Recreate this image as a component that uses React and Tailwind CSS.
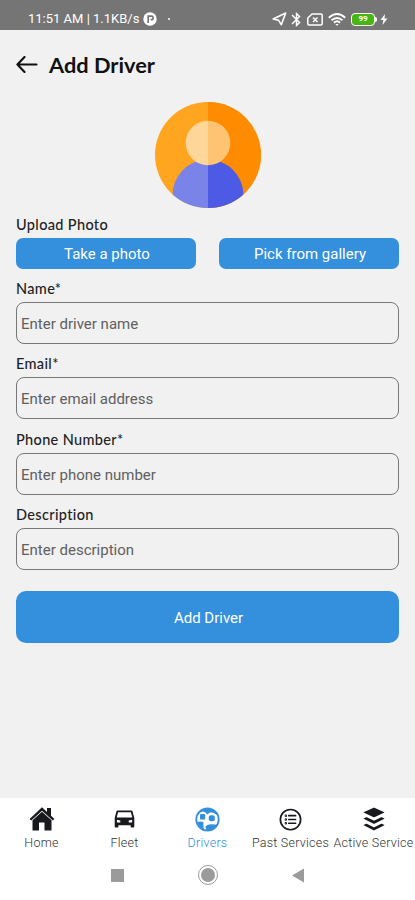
import React, { useState } from "react";
import { FaBuffer } from "react-icons/fa";
import { IoListCircleOutline } from "react-icons/io5";
import { MdBluetooth } from "react-icons/md";

const fields = [
  { name: "name", label: "Name*", placeholder: "Enter driver name" },
  { name: "email", label: "Email*", placeholder: "Enter email address" },
  { name: "phone", label: "Phone Number*", placeholder: "Enter phone number" },
  { name: "description", label: "Description", placeholder: "Enter description" },
];

const HomeIcon = () => (
  <svg width="26" height="24" viewBox="0 0 26 24" fill="#17191c">
    <path d="M13 0.3 L0.6 12 L2.2 13.6 L13 3.8 L23.8 13.6 L25.4 12 L22 8.8 V1 H18 V5 Z" />
    <path d="M13 4.7 L3.5 13.3 V23.6 H10 V15.5 H15.5 V23.6 H22.5 V13.3 Z" />
  </svg>
);

const CarIcon = () => (
  <svg width="21" height="18" viewBox="0 0 21 18" fill="#17191c">
    <path
      fillRule="evenodd"
      d="M3.6 0.5 H17.4 Q18.4 0.5 18.6 1.4 L20.3 8 V16.4 Q20.3 17.5 19.3 17.5 H17.6 Q16.6 17.5 16.6 16.4 V15.2 H4.4 V16.4 Q4.4 17.5 3.4 17.5 H1.7 Q0.7 17.5 0.7 16.4 V8 L2.4 1.4 Q2.6 0.5 3.6 0.5 Z M4.1 2.2 L2.7 7.6 H18.3 L16.9 2.2 Z M2.9 9.8 L6.3 10.6 V12.6 H2.9 Z M18.1 9.8 L14.7 10.6 V12.6 H18.1 Z"
    />
  </svg>
);

const DriversIcon = () => (
  <svg width="25" height="25" viewBox="0 0 25 25">
    <circle cx="12.5" cy="12.5" r="11.2" fill="#fff" stroke="#348fdc" strokeWidth="1.8" />
    <path d="M2.2 15 Q5 14 8.4 15 V20.5 L10 22.5 Q5 22 2.2 15 Z" fill="#348fdc" />
    <path d="M10.4 20 Q11.5 17.2 16.5 17.2 Q20.5 17.2 22.3 18 Q18.5 23.7 11.5 23.3 Z" fill="#348fdc" />
    <path d="M3 7 Q7.5 0.5 14 1.8 Q21 3 22.6 8.2 L20.5 7 Q18 4.8 15 5.6 L12.2 7.4 Q10.5 4.6 7.7 4.6 Q4.8 4.8 3 8 Z" fill="#348fdc" />
    <rect x="5" y="7" width="5.2" height="5.6" rx="1.2" fill="#348fdc" />
    <rect x="13.8" y="8.2" width="6" height="6" rx="2" fill="#348fdc" />
  </svg>
);

const Avatar = () => (
  <svg width="106" height="106" viewBox="0 0 106 106">
    <defs>
      <clipPath id="avatarCircle">
        <circle cx="53" cy="53" r="53" />
      </clipPath>
      <clipPath id="avatarRight">
        <rect x="53" width="53" height="106" />
      </clipPath>
    </defs>
    <g clipPath="url(#avatarCircle)">
      <rect width="106" height="106" fill="#ffa51f" />
      <circle cx="53" cy="93" r="35.5" fill="#7983e8" />
      <circle cx="53" cy="41" r="22.3" fill="#ffd69a" />
      <g clipPath="url(#avatarRight)">
        <rect width="106" height="106" fill="#ff8c00" />
        <circle cx="53" cy="93" r="35.5" fill="#4c5ae5" />
        <circle cx="53" cy="41" r="22.3" fill="#ffc473" />
      </g>
    </g>
  </svg>
);

const StatusBar = () => (
  <div className="flex h-[30px] items-center bg-[#757575] pt-2 pr-[27px] pl-7 text-[13px] text-white">
    <span className="w-[112px] whitespace-nowrap">11:51 AM | 1.1KB/s</span>
    <svg className="ml-[3px]" width="14" height="14" viewBox="0 0 14 14">
      <circle cx="7" cy="7" r="6.7" fill="#fff" />
      <path d="M5.2 11 V4.2 H8.4 a1.7 1.7 0 0 1 0 3.4 H7.6" fill="none" stroke="#757575" strokeWidth="1.7" />
    </svg>
    <span className="ml-[11px] h-[2px] w-[2px] rounded-full bg-white" />
    <div className="ml-auto flex items-center">
      <svg width="15" height="14" viewBox="0 0 15 14" fill="none" stroke="#fff" strokeWidth="1.6" strokeLinejoin="round">
        <path d="M13.7 1 L1.2 7 L6.6 8.3 L9.3 12.7 Z" />
      </svg>
      <MdBluetooth className="ml-[1px] h-[17px] w-[17px]" />
      <svg className="ml-[2px]" width="16" height="13" viewBox="0 0 16 13" fill="none" stroke="#fff" strokeWidth="1.5">
        <path d="M5 1 H14 Q15.2 1 15.2 2.2 V10.8 Q15.2 12 14 12 H2 Q0.8 12 0.8 10.8 V5 Z" strokeLinejoin="round" />
        <path d="M6 4.5 L10.5 9 M10.5 4.5 L6 9" />
      </svg>
      <svg className="ml-[5px]" width="18" height="13" viewBox="0 0 18 13" fill="none" stroke="#fff" strokeWidth="1.9">
        <path d="M0.8 4.7 Q9 -2.7 17.2 4.7 M3.5 7.3 Q9 2.5 14.5 7.3 M6 9.7 Q9 7 12 9.7" />
        <path d="M7.3 11 L9 12.7 L10.7 11 Z" fill="#fff" stroke="none" />
      </svg>
      <div className="ml-[5px] flex h-[13px] w-6 items-center justify-center rounded-[4px] border-[1.5px] border-white bg-[#48b512] text-[8px] font-bold leading-none">
        99
      </div>
      <span className="h-[5px] w-[2px] rounded-r bg-white" />
      <svg className="ml-[3px]" width="8" height="11" viewBox="0 0 8 11" fill="#fff">
        <path d="M5 0 L0.5 6 H3.3 L2.5 11 L7.5 4.4 H4.5 Z" />
      </svg>
    </div>
  </div>
);

const tabs = [
  { label: "Home", icon: <HomeIcon /> },
  { label: "Fleet", icon: <CarIcon /> },
  { label: "Drivers", icon: <DriversIcon />, active: true },
  { label: "Past Services", icon: <IoListCircleOutline className="h-[27px] w-[27px]" /> },
  { label: "Active Service", icon: <FaBuffer className="h-[26px] w-[26px]" /> },
];

const TabBar = () => (
  <nav className="grid h-[52px] grid-cols-5 bg-white">
    {tabs.map((tab) => (
      <button
        key={tab.label}
        type="button"
        className={`flex min-w-0 flex-col items-center ${tab.active ? "text-[#348fdc]" : "text-[#17191c]"}`}
      >
        <span className="mt-[7px] flex h-7 items-center">{tab.icon}</span>
        <span
          className={`mt-[2px] text-[12.5px] leading-[15px] font-light tracking-[0.25px] whitespace-nowrap ${
            tab.active ? "text-[#348fdc]" : "text-[#333]"
          }`}
        >
          {tab.label}
        </span>
      </button>
    ))}
  </nav>
);

const SystemNav = () => (
  <div className="flex h-[50px] items-center justify-center bg-white">
    <div className="flex w-[194px] items-center justify-between">
      <span className="h-[13px] w-[13px] bg-[#9b9b9b]" />
      <span className="flex h-5 w-5 items-center justify-center rounded-full border border-[#9b9b9b]">
        <span className="h-[14px] w-[14px] rounded-full bg-[#9b9b9b]" />
      </span>
      <svg className="mr-[1px]" width="12" height="15" viewBox="0 0 12 15" fill="#9b9b9b">
        <path d="M12 0.5 V14.5 L0 7.5 Z" />
      </svg>
    </div>
  </div>
);

const App = () => {
  const [formData, setFormData] = useState({
    name: "",
    email: "",
    phone: "",
    description: "",
  });

  const handleChange = (e) => {
    const { name, value } = e.target;
    setFormData({ ...formData, [name]: value });
  };

  return (
    <div className="flex h-[900px] w-[415px] flex-col overflow-hidden bg-[#f1f1f1] font-['Roboto',sans-serif]">
      <StatusBar />

      <header className="flex h-[72px] items-start pt-[20px] pl-4">
        <svg className="mt-[6px]" width="22" height="18" viewBox="0 0 22 18" fill="none" stroke="#111" strokeWidth="2.1">
          <path d="M8.5 1 L1.4 8.5 L8.5 16 M1.4 8.5 H20.5" strokeLinecap="round" strokeLinejoin="round" />
        </svg>
        <h1 className="ml-[11px] font-['Lato',sans-serif] text-[21.8px] leading-[30px] font-bold text-[#111]">Add Driver</h1>
      </header>

      <form className="flex flex-1 flex-col px-4" onSubmit={(e) => e.preventDefault()}>
        <div className="flex h-[106px] justify-center">
          <Avatar />
        </div>

        <p className="mt-[7px] font-['Lato',sans-serif] text-[14.5px] leading-[19px] font-medium tracking-[0.35px] text-[#222]">
          Upload Photo
        </p>
        <div className="mt-1 flex justify-between">
          <button type="button" className="h-[31px] w-[180px] rounded-[7px] bg-[#348fdc] pt-[2px] pl-[2px] text-[15px] text-white">
            Take a photo
          </button>
          <button type="button" className="h-[31px] w-[180px] rounded-[7px] bg-[#348fdc] pt-[2px] pl-[2px] text-[15px] text-white">
            Pick from gallery
          </button>
        </div>

        <div className="mt-[9px] flex flex-col gap-[9.3px]">
          {fields.map((field) => (
            <div key={field.name} className="h-[66px]">
              <label
                htmlFor={field.name}
                className="block h-[24px] font-['Lato',sans-serif] text-[14.5px] leading-[21px] font-medium tracking-[0.35px] text-[#222]"
              >
                {field.label}
              </label>
              <input
                id={field.name}
                name={field.name}
                value={formData[field.name]}
                onChange={handleChange}
                placeholder={field.placeholder}
                className="block h-[42px] w-full rounded-[8px] border border-[#777] px-1 pt-[2px] text-[15px] outline-none placeholder:text-[#606060]"
              />
            </div>
          ))}
        </div>

        <button type="submit" className="mt-[21px] h-[52px] rounded-[10px] bg-[#348fdc] pt-[2px] pl-[2px] text-[15px] text-white">
          Add Driver
        </button>
      </form>

      <TabBar />
      <SystemNav />
    </div>
  );
};

export default App;
